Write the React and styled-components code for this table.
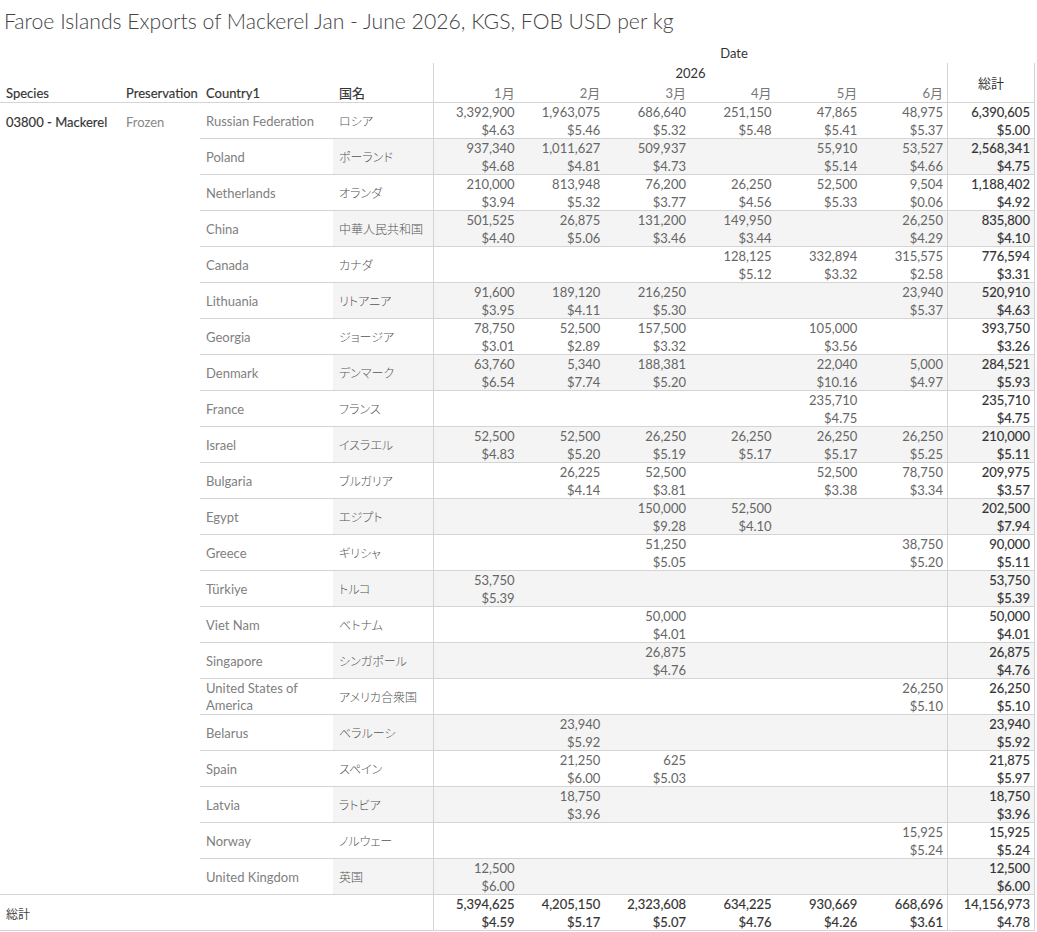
import React from "react";
import styled, { createGlobalStyle, css } from "styled-components";

const Global = createGlobalStyle`
  html, body { margin: 0; padding: 0; background: #fff; }
  body { font-family: Lato, "Noto Sans CJK JP", sans-serif; }
`;

const LINE = "#d4d4d4";
const BAND = "#f4f4f4";

const medium = css`
  color: #333;
  -webkit-text-stroke: 0.15px #333;
`;

const Page = styled.div`
  width: 1037px;
  height: 932px;
  overflow: hidden;
`;

const Title = styled.h1`
  margin: 0;
  padding-left: 4px;
  height: 43px;
  line-height: 43px;
  font-family: Lato, "Noto Sans CJK JP", sans-serif;
  font-weight: 300;
  font-size: 21.2px;
  color: #444;
  white-space: nowrap;
`;

const Grid = styled.div`
  display: grid;
  grid-template-columns: 120px 80px 133px 100px repeat(6, 85.6667px) 88px;
  font-size: 13px;
  font-family: Lato, "Noto Sans CJK JP", sans-serif;
  font-feature-settings: "palt" 1;
`;

const HeadCell = styled.div`
  box-sizing: border-box;
  height: ${(p) => p.$h || 20}px;
  line-height: ${(p) => p.$h || 20}px;
  padding: 0 ${(p) => (p.$align === "right" ? "4px" : "0")} 0 ${(p) => (p.$align === "left" ? "6px" : "0")};
  text-align: ${(p) => p.$align || "center"};
  color: ${(p) => (p.$muted ? "#777" : "#333")};
  ${(p) => p.$strong && medium}
  white-space: nowrap;
  ${(p) => p.$span && css`grid-column: ${p.$span};`}
  ${(p) => p.$rows && css`grid-row: ${p.$rows};`}
  ${(p) => p.$lineLeft && css`border-left: 1px solid ${LINE};`}
  ${(p) => p.$lineRight && css`border-right: 1px solid ${LINE};`}
  ${(p) => p.$lineBottom && css`border-bottom: 1px solid ${LINE};`}
`;

const DimCell = styled.div`
  box-sizing: border-box;
  grid-row: span 22;
  padding: 10px 0 0 6px;
  line-height: 18px;
  color: #888;
  ${(p) => p.$dark && medium}
  border-bottom: 1px solid ${LINE};
  white-space: nowrap;
`;

const LabelCell = styled.div`
  box-sizing: border-box;
  height: 36px;
  display: flex;
  align-items: center;
  padding: 1px 0 0 6px;
  line-height: 17px;
  color: ${(p) => (p.$jp ? "#555" : "#808080")};
  font-size: ${(p) => (p.$jp ? "12px" : "13px")};
  font-weight: ${(p) => (p.$jp ? 300 : 400)};
  background: ${(p) => (p.$band ? BAND : "transparent")};
  border-bottom: 1px solid ${LINE};
`;

const ValueCell = styled.div`
  box-sizing: border-box;
  height: 36px;
  padding: 1px 4px 0 0;
  text-align: right;
  line-height: 17.5px;
  color: #666;
  ${(p) => p.$total && medium}
  background: ${(p) => (p.$band ? BAND : "transparent")};
  border-bottom: 1px solid ${LINE};
  ${(p) => p.$lineLeft && css`border-left: 1px solid ${LINE};`}
  ${(p) => p.$lineRight && css`border-right: 1px solid ${LINE};`}
  white-space: nowrap;
`;

const TotalLabel = styled.div`
  box-sizing: border-box;
  grid-column: 1 / span 4;
  height: 36px;
  display: flex;
  align-items: center;
  padding: 1px 0 0 6px;
  font-size: 12px;
  color: #444;
  border-bottom: 1px solid ${LINE};
`;

const Line = styled.div`
  display: block;
  height: 17.5px;
`;

const rows = [
  ["Russian Federation", "ロシア", [["3,392,900", "$4.63"], ["1,963,075", "$5.46"], ["686,640", "$5.32"], ["251,150", "$5.48"], ["47,865", "$5.41"], ["48,975", "$5.37"]], ["6,390,605", "$5.00"]],
  ["Poland", "ポーランド", [["937,340", "$4.68"], ["1,011,627", "$4.81"], ["509,937", "$4.73"], null, ["55,910", "$5.14"], ["53,527", "$4.66"]], ["2,568,341", "$4.75"]],
  ["Netherlands", "オランダ", [["210,000", "$3.94"], ["813,948", "$5.32"], ["76,200", "$3.77"], ["26,250", "$4.56"], ["52,500", "$5.33"], ["9,504", "$0.06"]], ["1,188,402", "$4.92"]],
  ["China", "中華人民共和国", [["501,525", "$4.40"], ["26,875", "$5.06"], ["131,200", "$3.46"], ["149,950", "$3.44"], null, ["26,250", "$4.29"]], ["835,800", "$4.10"]],
  ["Canada", "カナダ", [null, null, null, ["128,125", "$5.12"], ["332,894", "$3.32"], ["315,575", "$2.58"]], ["776,594", "$3.31"]],
  ["Lithuania", "リトアニア", [["91,600", "$3.95"], ["189,120", "$4.11"], ["216,250", "$5.30"], null, null, ["23,940", "$5.37"]], ["520,910", "$4.63"]],
  ["Georgia", "ジョージア", [["78,750", "$3.01"], ["52,500", "$2.89"], ["157,500", "$3.32"], null, ["105,000", "$3.56"], null], ["393,750", "$3.26"]],
  ["Denmark", "デンマーク", [["63,760", "$6.54"], ["5,340", "$7.74"], ["188,381", "$5.20"], null, ["22,040", "$10.16"], ["5,000", "$4.97"]], ["284,521", "$5.93"]],
  ["France", "フランス", [null, null, null, null, ["235,710", "$4.75"], null], ["235,710", "$4.75"]],
  ["Israel", "イスラエル", [["52,500", "$4.83"], ["52,500", "$5.20"], ["26,250", "$5.19"], ["26,250", "$5.17"], ["26,250", "$5.17"], ["26,250", "$5.25"]], ["210,000", "$5.11"]],
  ["Bulgaria", "ブルガリア", [null, ["26,225", "$4.14"], ["52,500", "$3.81"], null, ["52,500", "$3.38"], ["78,750", "$3.34"]], ["209,975", "$3.57"]],
  ["Egypt", "エジプト", [null, null, ["150,000", "$9.28"], ["52,500", "$4.10"], null, null], ["202,500", "$7.94"]],
  ["Greece", "ギリシャ", [null, null, ["51,250", "$5.05"], null, null, ["38,750", "$5.20"]], ["90,000", "$5.11"]],
  ["Türkiye", "トルコ", [["53,750", "$5.39"], null, null, null, null, null], ["53,750", "$5.39"]],
  ["Viet Nam", "ベトナム", [null, null, ["50,000", "$4.01"], null, null, null], ["50,000", "$4.01"]],
  ["Singapore", "シンガポール", [null, null, ["26,875", "$4.76"], null, null, null], ["26,875", "$4.76"]],
  ["United States of America", "アメリカ合衆国", [null, null, null, null, null, ["26,250", "$5.10"]], ["26,250", "$5.10"]],
  ["Belarus", "ベラルーシ", [null, ["23,940", "$5.92"], null, null, null, null], ["23,940", "$5.92"]],
  ["Spain", "スペイン", [null, ["21,250", "$6.00"], ["625", "$5.03"], null, null, null], ["21,875", "$5.97"]],
  ["Latvia", "ラトビア", [null, ["18,750", "$3.96"], null, null, null, null], ["18,750", "$3.96"]],
  ["Norway", "ノルウェー", [null, null, null, null, null, ["15,925", "$5.24"]], ["15,925", "$5.24"]],
  ["United Kingdom", "英国", [["12,500", "$6.00"], null, null, null, null, null], ["12,500", "$6.00"]],
];

const grand = [["5,394,625", "$4.59"], ["4,205,150", "$5.17"], ["2,323,608", "$5.07"], ["634,225", "$4.76"], ["930,669", "$4.26"], ["668,696", "$3.61"]];
const grandTotal = ["14,156,973", "$4.78"];

const months = ["1月", "2月", "3月", "4月", "5月", "6月"];

function Pair({ v }) {
  if (!v) return null;
  return (
    <>
      <Line>{v[0]}</Line>
      <Line>{v[1]}</Line>
    </>
  );
}

export default function App() {
  return (
    <Page>
      <Global />
      <Title>Faroe Islands Exports of Mackerel Jan - June 2026, KGS, FOB USD per kg</Title>
      <Grid>
        <HeadCell $span="1 / span 4" />
        <HeadCell $span="5 / span 7">Date</HeadCell>
        <HeadCell $span="1 / span 4" />
        <HeadCell $span="5 / span 6" $lineLeft>2026</HeadCell>
        <HeadCell $span="11" $rows="2 / span 2" $h={40} $lineLeft $lineRight $lineBottom>総計</HeadCell>
        <HeadCell $align="left" $strong $lineBottom $span="1" $rows="3">Species</HeadCell>
        <HeadCell $align="left" $strong $lineBottom>Preservation</HeadCell>
        <HeadCell $align="left" $strong $lineBottom>Country1</HeadCell>
        <HeadCell $align="left" $strong $lineBottom>国名</HeadCell>
        {months.map((m, i) => (
          <HeadCell key={m} $align="right" $muted $lineBottom $lineLeft={i === 0}>
            {m}
          </HeadCell>
        ))}

        <DimCell $dark>03800 - Mackerel</DimCell>
        <DimCell>Frozen</DimCell>
        {rows.map(([country, jp, vals, total], r) => {
          const band = r % 2 === 1;
          return (
            <React.Fragment key={country}>
              <LabelCell>{country}</LabelCell>
              <LabelCell $jp $band={band}>{jp}</LabelCell>
              {vals.map((v, i) => (
                <ValueCell key={i} $band={band} $lineLeft={i === 0}>
                  <Pair v={v} />
                </ValueCell>
              ))}
              <ValueCell $band={band} $total $lineLeft $lineRight>
                <Pair v={total} />
              </ValueCell>
            </React.Fragment>
          );
        })}

        <TotalLabel>総計</TotalLabel>
        {grand.map((v, i) => (
          <ValueCell key={i} $total $lineLeft={i === 0}>
            <Pair v={v} />
          </ValueCell>
        ))}
        <ValueCell $total $lineLeft $lineRight>
          <Pair v={grandTotal} />
        </ValueCell>
      </Grid>
    </Page>
  );
}
